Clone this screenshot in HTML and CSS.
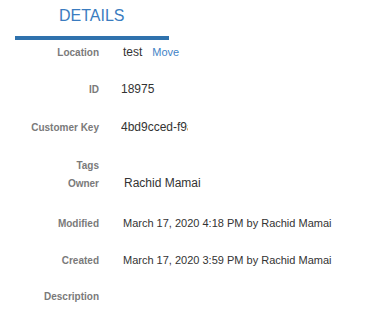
FILE: index.html
```html
<!DOCTYPE html>
<html>
<head>
<meta charset="utf-8">
<link rel="stylesheet" href="styles.css">
</head>
<body>
<div class="panel">
  <div class="header"><h2 class="title">DETAILS</h2></div>
  <div class="rows">
    <div class="row row-loc"><span class="label">Location</span><span class="value value-loc">test<a class="move">Move</a></span></div>
    <div class="row row-id"><span class="label">ID</span><span class="value">18975</span></div>
    <div class="row row-ck"><span class="label">Customer Key</span><span class="value value-key">4bd9cced-f9a1</span></div>
    <div class="row row-tags"><span class="label">Tags</span><span class="value"></span></div>
    <div class="row row-owner"><span class="label">Owner</span><span class="value value-owner">Rachid Mamai</span></div>
    <div class="row row-mod"><span class="label">Modified</span><span class="value value-date">March 17, 2020 4:18 PM by Rachid Mamai</span></div>
    <div class="row row-created"><span class="label">Created</span><span class="value value-date">March 17, 2020 3:59 PM by Rachid Mamai</span></div>
    <div class="row row-desc"><span class="label">Description</span><span class="value"></span></div>
  </div>
</div>
</body>
</html>
```
FILE: styles.css
```css
html, body {
  margin: 0;
  padding: 0;
  background: #ffffff;
}
body {
  font-family: "Liberation Sans", Arial, sans-serif;
  color: #333333;
}
.panel {
  width: 386px;
}
.header {
  margin-left: 15px;
  width: 154px;
  padding-top: 6px;
  border-bottom: 4px solid #2f72ad;
}
.title {
  margin: 0 0 10px 44px;
  font-size: 16px;
  line-height: 20px;
  font-weight: normal;
  color: #3a7cc0;
}
.rows {
  padding-top: 4px;
}
.row {
  display: flex;
  align-items: baseline;
  height: 37px;
}
.row-id { height: 38px; }
.row-ck { height: 39px; }
.row-tags { height: 17px; }
.row-owner { height: 40px; }
.row-mod { height: 37px; }
.row-created { height: 37px; }
.label {
  width: 99px;
  flex: none;
  text-align: right;
  font-size: 10px;
  line-height: 16px;
  font-weight: bold;
  color: #7a7a7a;
}
.value {
  margin-left: 22px;
  font-size: 12px;
  line-height: 16px;
  color: #333333;
  white-space: nowrap;
}
.value-loc { margin-left: 24px; }
.move {
  margin-left: 10px;
  font-size: 11px;
  color: #3f83c6;
  font-weight: normal;
}
.value-key {
  display: inline-block;
  width: 67px;
  overflow: hidden;
}
.value-owner { margin-left: 25px; }
.value-date {
  margin-left: 24px;
  font-size: 11px;
}
```
